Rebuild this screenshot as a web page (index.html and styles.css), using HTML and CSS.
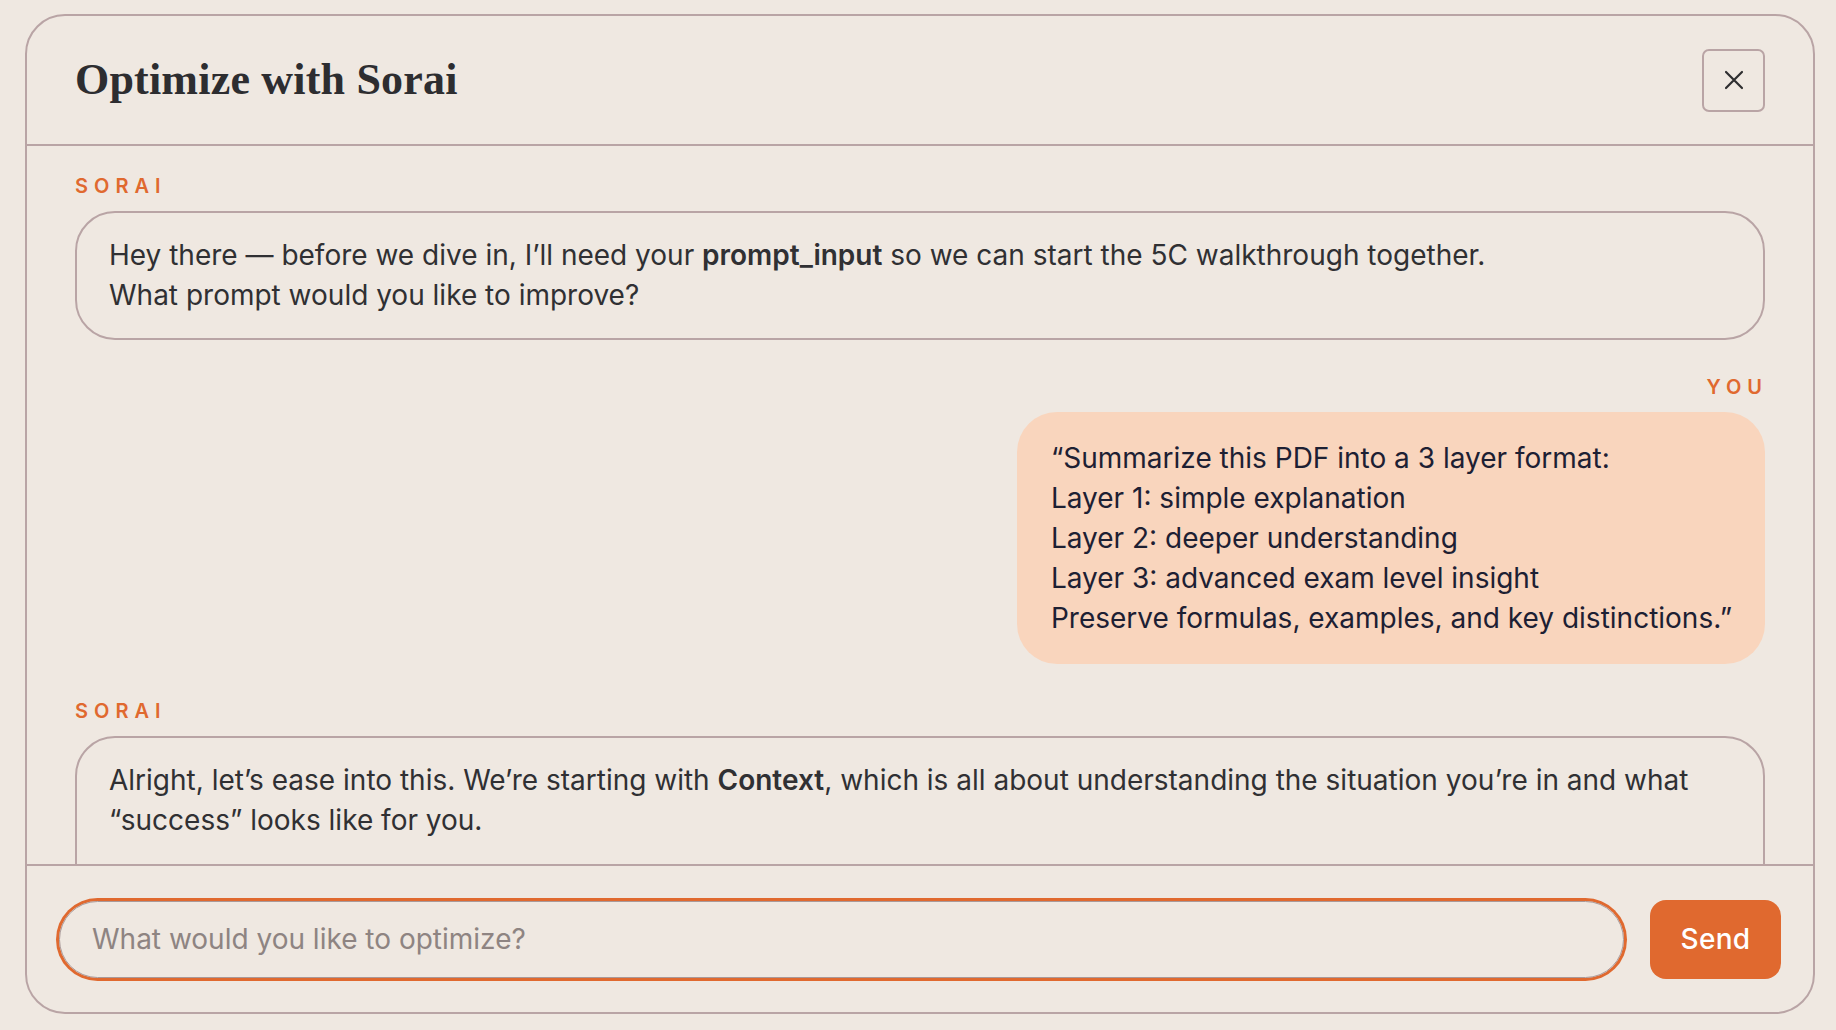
FILE: index.html
```html
<!DOCTYPE html>
<html lang="en">
<head>
<meta charset="utf-8">
<title>Optimize with Sorai</title>
<link rel="stylesheet" href="styles.css">
</head>
<body>
<div class="panel">
  <header class="panel-header">
    <h1 class="title">Optimize with Sorai</h1>
    <button class="close-btn" aria-label="Close">
      <svg width="22" height="22" viewBox="0 0 22 22" fill="none" stroke="#2e2e30" stroke-width="2.2" stroke-linecap="round"><path d="M3 3 L19 19 M19 3 L3 19"/></svg>
    </button>
  </header>
  <main class="messages">
    <section class="msg msg-ai">
      <div class="label">SORAI</div>
      <div class="bubble bubble-ai">Hey there — before we dive in, I’ll need your <b>prompt_input</b> so we can start the 5C walkthrough together.<br>What prompt would you like to improve?</div>
    </section>
    <section class="msg msg-user">
      <div class="label">YOU</div>
      <div class="bubble bubble-user">“Summarize this PDF into a 3 layer format:<br>Layer 1: simple explanation<br>Layer 2: deeper understanding<br>Layer 3: advanced exam level insight<br>Preserve formulas, examples, and key distinctions.”</div>
    </section>
    <section class="msg msg-ai">
      <div class="label">SORAI</div>
      <div class="bubble bubble-ai bubble-last">Alright, let’s ease into this. We’re starting with <b>Context</b>, which is all about understanding the situation you’re in and what “success” looks like for you.</div>
    </section>
  </main>
  <footer class="composer">
    <input class="composer-input" type="text" placeholder="What would you like to optimize?">
    <button class="send-btn">Send</button>
  </footer>
</div>
</body>
</html>
```
FILE: styles.css
```css
* { box-sizing: border-box; }
html, body { height: 100%; }
body {
  margin: 0;
  padding: 14px 21px 16px 25px;
  background: #efe8e1;
  font-family: Inter, "Noto Sans", sans-serif;
  color: #2f2f33;
}
.panel {
  height: 100%;
  border: 2px solid #b9a4a5;
  border-radius: 40px;
  background: #efe8e1;
  display: flex;
  flex-direction: column;
  overflow: hidden;
}
.panel-header {
  flex: 0 0 130px;
  display: flex;
  align-items: center;
  justify-content: space-between;
  padding: 0 48px 0 48px;
  border-bottom: 2px solid #b9a4a5;
}
.title {
  margin: 0 0 2px 0;
  font-family: "Liberation Serif", "Times New Roman", serif;
  font-weight: 700;
  font-size: 44px;
  color: #2d2d30;
  letter-spacing: 0.2px;
}
.close-btn {
  width: 63px;
  height: 63px;
  border: 2px solid #b9a4a5;
  border-radius: 7px;
  background: transparent;
  display: flex;
  align-items: center;
  justify-content: center;
  padding: 0;
}
.messages {
  flex: 1 1 auto;
  overflow: hidden;
  padding: 28px 48px 0 48px;
  display: flex;
  flex-direction: column;
  gap: 35px;
}
.msg { display: flex; flex-direction: column; }
.msg-user { align-items: flex-end; }
.label {
  font-size: 20px;
  font-weight: 600;
  letter-spacing: 0.3em;
  color: #e0692f;
  line-height: 24px;
  margin-bottom: 13px;
}
.msg-user .label { margin-right: -0.15em; }
.bubble {
  font-size: 28px;
  line-height: 40px;
  border-radius: 40px;
}
.bubble b { font-weight: 600; }
.bubble-ai {
  border: 2px solid #b9a4a5;
  padding: 22px 32px 23px 32px;
  color: #303033;
  flex-shrink: 0;
}
.bubble-last { padding-bottom: 80px; }
.bubble-user {
  background: #f9d5bd;
  padding: 26px 33px 26px 34px;
  color: #1d2033;
}
.composer {
  flex: 0 0 148px;
  border-top: 2px solid #b9a4a5;
  display: flex;
  align-items: center;
  gap: 26px;
  padding: 0 32px 0 32px;
}
.composer-input {
  flex: 1 1 auto;
  height: 77px;
  border: 1.5px solid #a99999;
  border-radius: 40px;
  box-shadow: 0 0 0 3px #e0692f;
  background: transparent;
  outline: none;
  padding: 0 32px;
  font-family: Inter, "Noto Sans", sans-serif;
  font-size: 28px;
  color: #2f2f33;
}
.composer-input::placeholder { color: #8e8482; }
.send-btn {
  flex: 0 0 131px;
  height: 79px;
  border: none;
  border-radius: 16px;
  background: #e0692f;
  color: #fff;
  font-family: Inter, "Noto Sans", sans-serif;
  font-size: 28px;
  font-weight: 500;
  letter-spacing: 0.3px;
}
```
